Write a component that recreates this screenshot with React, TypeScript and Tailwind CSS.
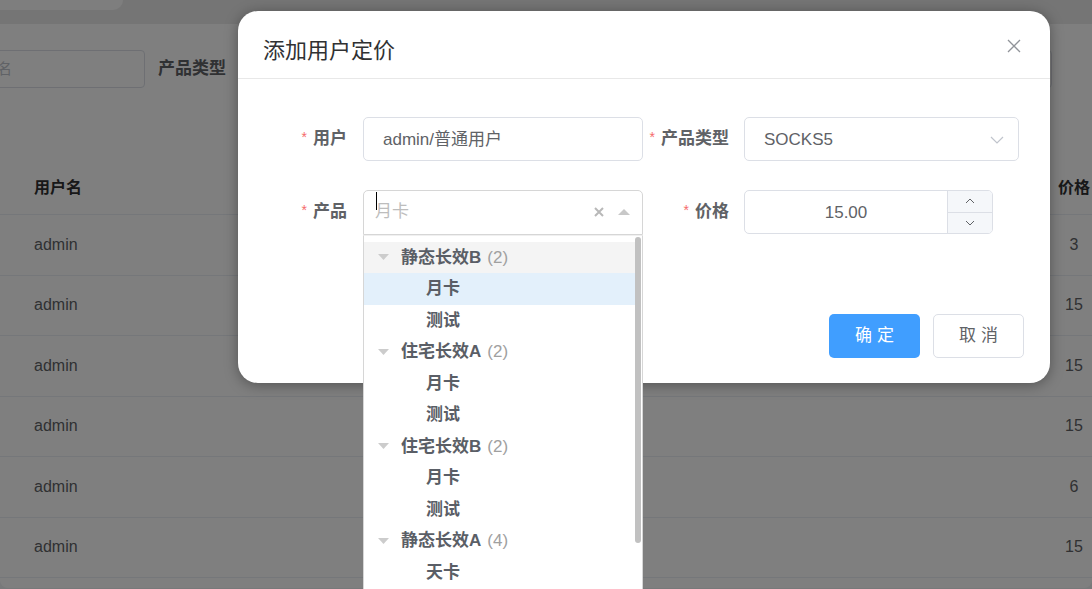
import React from "react";

const FONT = { fontFamily: '"Liberation Sans", "Noto Sans CJK SC", sans-serif' };

function Tri() {
  return (
    <svg width="11" height="6" viewBox="0 0 11 6" className="shrink-0">
      <path d="M0 0 L11 0 L5.5 6 Z" fill="#cccccc" />
    </svg>
  );
}

function Group({ name, count, bg }: { name: string; count: number; bg?: string }) {
  return (
    <div className={`h-[31.5px] flex items-center pl-[14px] ${bg ?? ""}`}>
      <Tri />
      <span className="ml-[12px] font-bold text-[17px] text-[#5a5e66]">{name}</span>
      <span className="ml-[6px] text-[17px] text-[#a0a0a0]">({count})</span>
    </div>
  );
}

function Child({ name, bg }: { name: string; bg?: string }) {
  return (
    <div className={`h-[31.5px] flex items-center pl-[62px] ${bg ?? ""}`}>
      <span className="font-bold text-[17px] text-[#5a5e66]">{name}</span>
    </div>
  );
}

function Label({ text, w }: { text: string; w: string }) {
  return (
    <div className={`${w} shrink-0 text-right text-[17px] font-bold text-[#606266] flex items-center justify-end`}>
      <span className="text-[#f56c6c] text-[14px] font-normal mr-[6px] relative top-[-2px]">*</span>
      {text}
    </div>
  );
}

export default function App() {
  const rows = ["3", "15", "15", "15", "6", "15"];
  return (
    <div className="relative w-[1092px] h-[589px] overflow-hidden bg-[#f0f2f5]" style={FONT}>
      {/* top bar */}
      <div className="h-[24px] bg-[#ebebeb]">
        <div className="w-[123px] h-[10px] bg-[#fcfcfc] rounded-br-[12px]" />
      </div>
      {/* card */}
      <div className="bg-white rounded-b-[8px] h-[564px] flex flex-col">
        <div className="mt-[26px] h-[38px] flex items-center">
          <div className="ml-[-94px] w-[239px] h-[38px] border border-[#dcdfe6] rounded-[4px] flex items-center pl-[15px] text-[15px] text-[#c0c4cc] shrink-0">
            请输入用户名
          </div>
          <span className="ml-[13px] text-[17px] font-bold text-[#606266]">产品类型</span>
          <div className="ml-[12px] mr-[40px] flex-1 h-[38px] border border-[#dcdfe6] rounded-[4px]" />
        </div>
        <div className="mt-[73px]">
          <div className="h-[54px] border-b border-[#ebeef5] flex items-center text-[16px] font-bold text-[#303133]">
            <span className="pl-[34px]">用户名</span>
            <span className="ml-auto w-[36px] text-center">价格</span>
          </div>
          {rows.map((v, i) => (
            <div key={i} className="h-[60.5px] border-b border-[#ebeef5] flex items-center text-[16px] text-[#606266]">
              <span className="pl-[34px]">admin</span>
              <span className="ml-auto w-[36px] text-center">{v}</span>
            </div>
          ))}
        </div>
      </div>

      {/* overlay */}
      <div className="absolute inset-0 bg-black/50" />

      {/* modal */}
      <div className="absolute left-[238px] top-[11px] w-[812px] h-[372px] bg-white rounded-[20px] shadow-[0_2px_14px_rgba(0,0,0,0.35)]">
        <div className="h-[68px] border-b border-[#e8e8e8] flex items-start justify-between px-[25px]">
          <span className="mt-[25px] leading-[30px] text-[22px] text-[#303133]">添加用户定价</span>
          <svg width="14" height="14" viewBox="0 0 14 14" className="mt-[28px] mr-[4px]">
            <path d="M1 1 L13 13 M13 1 L1 13" stroke="#909399" strokeWidth="1.3" />
          </svg>
        </div>

        <div className="pt-[38px]">
          {/* row 1 */}
          <div className="flex items-center h-[44px]">
            <Label text="用户" w="w-[109px]" />
            <div className="ml-[16px] w-[280px] h-[44px] border border-[#dcdfe6] rounded-[5px] flex items-center pl-[19px] pt-[1px] text-[17px] text-[#606266]">
              admin/普通用户
            </div>
            <Label text="产品类型" w="w-[86px]" />
            <div className="ml-[15px] w-[275px] h-[44px] border border-[#dcdfe6] rounded-[5px] flex items-center pl-[19px] pr-[14px] pt-[1px] text-[17px] text-[#606266]">
              <span className="flex-1">SOCKS5</span>
              <svg width="14" height="8" viewBox="0 0 14 8">
                <path d="M1 1 L7 7 L13 1" stroke="#c0c4cc" strokeWidth="1.2" fill="none" />
              </svg>
            </div>
          </div>

          {/* row 2 */}
          <div className="flex items-center h-[44px] mt-[29px]">
            <Label text="产品" w="w-[109px]" />
            <div className="ml-[16px] w-[280px] h-[45px] relative">
              <div className="h-[45px] border border-[#d6d6d6] rounded-t-[5px] flex items-center pl-[11px] pr-[12px]">
                <div className="absolute left-[13px] top-[2px] w-[1px] h-[18px] bg-black" />
                <span className="flex-1 text-[17px] text-[#bdbdbd]">月卡</span>
                <svg width="10" height="10" viewBox="0 0 10 10" className="mr-[14px]">
                  <path d="M1 1 L9 9 M9 1 L1 9" stroke="#b8b8b8" strokeWidth="2" />
                </svg>
                <svg width="12" height="6" viewBox="0 0 12 6">
                  <path d="M0 6 L12 6 L6 0 Z" fill="#c8c8c8" />
                </svg>
              </div>
              <div className="absolute left-0 top-full w-[280px] h-[400px] bg-white border-x border-[#d6d6d6] border-t border-t-[#f0f0f0] pt-[6px]">
                <div className="absolute right-[1px] top-[1px] w-[6px] h-[306px] bg-[#c1c1c1] rounded-[3px]" />
                <div className="mr-[7px]">
                  <Group name="静态长效B" count={2} bg="bg-[#f4f4f4]" />
                  <Child name="月卡" bg="bg-[#e3f0fb]" />
                  <Child name="测试" />
                  <Group name="住宅长效A" count={2} />
                  <Child name="月卡" />
                  <Child name="测试" />
                  <Group name="住宅长效B" count={2} />
                  <Child name="月卡" />
                  <Child name="测试" />
                  <Group name="静态长效A" count={4} />
                  <Child name="天卡" />
                </div>
              </div>
            </div>
            <Label text="价格" w="w-[86px]" />
            <div className="ml-[15px] w-[249px] h-[44px] border border-[#dcdfe6] rounded-[5px] flex overflow-hidden">
              <div className="flex-1 flex items-center justify-center text-[17px] text-[#606266] pt-[1px]">15.00</div>
              <div className="w-[45px] border-l border-[#dcdfe6] bg-[#f5f7fa] flex flex-col">
                <div className="flex-1 flex items-center justify-center border-b border-[#dcdfe6]">
                  <svg width="10" height="6" viewBox="0 0 10 6">
                    <path d="M1 5 L5 1 L9 5" stroke="#606266" strokeWidth="1" fill="none" />
                  </svg>
                </div>
                <div className="flex-1 flex items-center justify-center">
                  <svg width="10" height="6" viewBox="0 0 10 6">
                    <path d="M1 1 L5 5 L9 1" stroke="#606266" strokeWidth="1" fill="none" />
                  </svg>
                </div>
              </div>
            </div>
          </div>

          {/* buttons */}
          <div className="flex justify-end pr-[26px] mt-[80px]">
            <div className="w-[91px] h-[44px] bg-[#409eff] rounded-[5px] text-white text-[17px] flex items-center justify-center tracking-[5px] pl-[5px]">
              确定
            </div>
            <div className="ml-[13px] w-[91px] h-[44px] border border-[#dcdfe6] rounded-[5px] text-[#606266] text-[17px] flex items-center justify-center tracking-[5px] pl-[5px]">
              取消
            </div>
          </div>
        </div>
      </div>
    </div>
  );
}
